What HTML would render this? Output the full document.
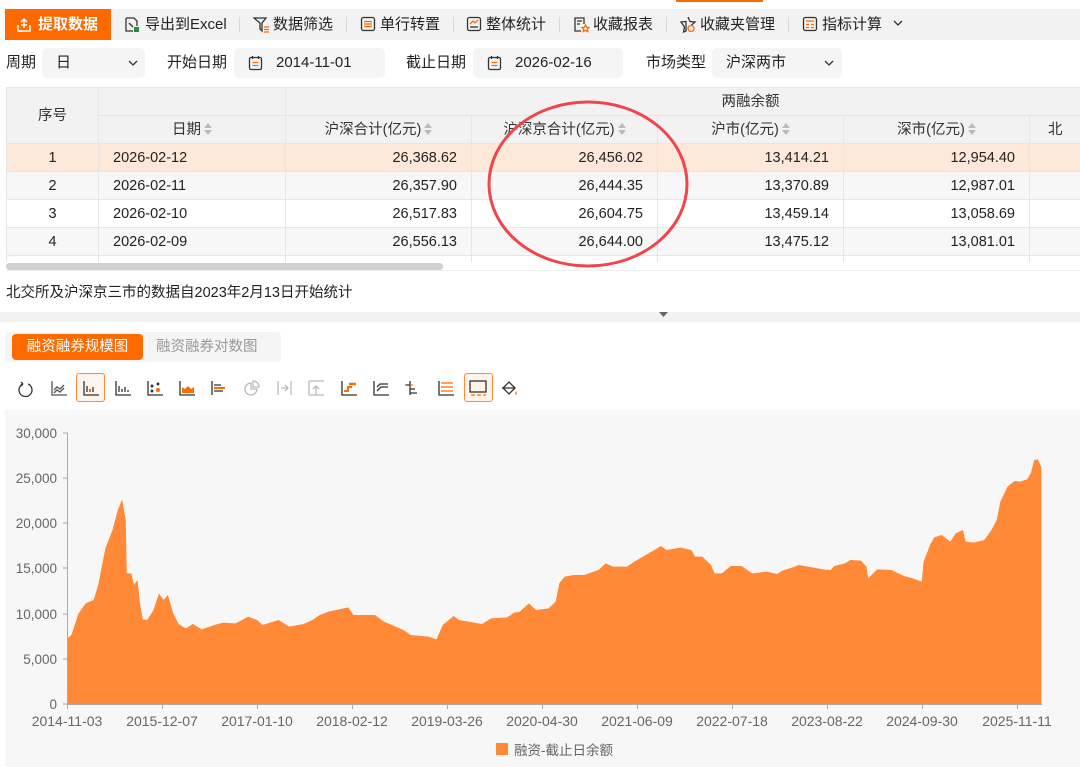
<!DOCTYPE html>
<html><head><meta charset="utf-8"><style>
*{margin:0;padding:0;box-sizing:border-box}
body{width:1080px;height:767px;overflow:hidden;background:#fff;font-family:"Liberation Sans","Noto Sans CJK SC",sans-serif;color:#333;position:relative;font-size:15px}
.a{position:absolute}
.tb{left:5px;top:9px;width:1075px;height:31px;background:#f2f2f2}
.tbi{top:9px;height:31px;line-height:31px;font-size:15px;color:#222}
.sep{top:17px;width:1px;height:15px;background:#d8d8d8}
.box{top:48px;height:30px;background:#f5f5f5;border-radius:5px;line-height:30px;font-size:15px;color:#222}
.lbl{top:48px;line-height:30px;font-size:15px;color:#222}
.cell{position:absolute;height:28px;line-height:28px;font-size:14.5px;color:#222;border-right:1px solid #e6e6e6;border-bottom:1px solid #e6e6e6}
.r{text-align:right;padding-right:14px}
.c{text-align:center}
.l{padding-left:14px}
.h{background:#f2f2f2;color:#333}
.sort{display:inline-block;width:8px;height:12px;vertical-align:-1px;margin-left:3px}
</style></head><body>
<div class="a" style="left:676px;top:0;width:87px;height:2px;background:#ff6a00"></div>
<div class="a tb"></div>
<div class="a" style="left:5px;top:9px;width:106px;height:31px;background:#ff6a00;color:#fff;line-height:31px;font-size:15px;font-weight:bold">
<svg class="a" style="left:11px;top:8px" width="16" height="16" viewBox="0 0 16 16" fill="none" stroke="#fff" stroke-width="1.4"><path d="M2 8v6h12V8M5 8h6M8 11V2M5 5l3-3 3 3"/></svg>
<span class="a" style="left:33px">提取数据</span></div>
<svg class="a" style="left:124px;top:16px" width="16" height="17" viewBox="0 0 16 17" fill="none" stroke="#333" stroke-width="1.3"><path d="M2 2h8l3 3v5M2 2v13h7"/><path d="M5 7l4 4" /><rect x="10" y="11" width="5" height="5" fill="#2a8a3a" stroke="none"/></svg>
<span class="a tbi" style="left:145px">导出到Excel</span>
<div class="a sep" style="left:239px"></div>
<svg class="a" style="left:253px;top:16px" width="17" height="17" viewBox="0 0 17 17" fill="none" stroke="#333" stroke-width="1.3"><path d="M1 2h12L9 7v8l-2-2V7z"/><path d="M11 11h5M11 13.5h5M11 16h5" stroke="#ff6a00"/></svg>
<span class="a tbi" style="left:273px">数据筛选</span>
<div class="a sep" style="left:346px"></div>
<svg class="a" style="left:360px;top:16px" width="16" height="16" viewBox="0 0 16 16" fill="none" stroke="#333" stroke-width="1.3"><rect x="1.5" y="1.5" width="13" height="13" rx="2"/><path d="M4 5.5h8M4 8h8M4 10.5h8" stroke="#ff6a00"/></svg>
<span class="a tbi" style="left:380px">单行转置</span>
<div class="a sep" style="left:453px"></div>
<svg class="a" style="left:466px;top:16px" width="16" height="16" viewBox="0 0 16 16" fill="none" stroke="#333" stroke-width="1.3"><rect x="1.5" y="1.5" width="13" height="13" rx="2"/><path d="M4 8l3-3 2 2 3-3" stroke="#ff6a00"/><path d="M4 11h8"/></svg>
<span class="a tbi" style="left:486px">整体统计</span>
<div class="a sep" style="left:559px"></div>
<svg class="a" style="left:573px;top:16px" width="17" height="17" viewBox="0 0 17 17" fill="none" stroke="#333" stroke-width="1.3"><path d="M8 15H2V2h9v6M4 5h5M4 8h3"/><path d="M12.5 9l1.2 2.3 2.3.3-1.7 1.6.5 2.4-2.3-1.2-2.3 1.2.5-2.4-1.7-1.6 2.3-.3z" stroke="#ff6a00"/></svg>
<span class="a tbi" style="left:593px">收藏报表</span>
<div class="a sep" style="left:666px"></div>
<svg class="a" style="left:680px;top:16px" width="17" height="17" viewBox="0 0 17 17" fill="none" stroke="#333" stroke-width="1.3"><path d="M8 1l2 4.5 5 .5-3.7 3.3M6 15l-2.5 1 1-5L1 6l5-.5z"/><circle cx="11" cy="12.5" r="3" stroke="#ff6a00"/></svg>
<span class="a tbi" style="left:700px">收藏夹管理</span>
<div class="a sep" style="left:788px"></div>
<svg class="a" style="left:802px;top:16px" width="16" height="16" viewBox="0 0 16 16" fill="none" stroke="#333" stroke-width="1.3"><rect x="1.5" y="1.5" width="13" height="13" rx="2"/><path d="M4 5h8M4 8.5h3M9 8.5h3M4 11.5h3M9 11.5h3" stroke="#ff6a00"/></svg>
<span class="a tbi" style="left:822px">指标计算</span>
<svg class="a" style="left:893px;top:20px" width="10" height="7" viewBox="0 0 10 7" fill="none" stroke="#333" stroke-width="1.3"><path d="M1 1l4 4 4-4"/></svg>

<span class="a lbl" style="left:6px">周期</span>
<div class="a box" style="left:42px;width:103px;padding-left:14px">日<svg class="a" style="left:86px;top:12px" width="10" height="7" viewBox="0 0 10 7" fill="none" stroke="#333" stroke-width="1.3"><path d="M1 1l4 4 4-4"/></svg></div>
<span class="a lbl" style="left:167px">开始日期</span>
<div class="a box" style="left:234px;width:151px;padding-left:42px"><svg class="a" style="left:14px;top:7px" width="15" height="16" viewBox="0 0 15 16" fill="none" stroke="#333" stroke-width="1.3"><rect x="1.5" y="2.5" width="12" height="12" rx="1.5"/><path d="M4.5 1v3M10.5 1v3"/><path d="M4.5 7.5h6M4.5 10.5h6" stroke="#ff6a00"/></svg>2014-11-01</div>
<span class="a lbl" style="left:406px">截止日期</span>
<div class="a box" style="left:473px;width:150px;padding-left:42px"><svg class="a" style="left:14px;top:7px" width="15" height="16" viewBox="0 0 15 16" fill="none" stroke="#333" stroke-width="1.3"><rect x="1.5" y="2.5" width="12" height="12" rx="1.5"/><path d="M4.5 1v3M10.5 1v3"/><path d="M4.5 7.5h6M4.5 10.5h6" stroke="#ff6a00"/></svg>2026-02-16</div>
<span class="a lbl" style="left:646px">市场类型</span>
<div class="a box" style="left:712px;width:130px;padding-left:14px">沪深两市<svg class="a" style="left:112px;top:12px" width="10" height="7" viewBox="0 0 10 7" fill="none" stroke="#333" stroke-width="1.3"><path d="M1 1l4 4 4-4"/></svg></div>

<div class="a" style="left:6px;top:87px;width:1074px;height:176px;border-top:1px solid #e6e6e6;border-left:1px solid #e6e6e6;overflow:hidden">
<div class="cell h c" style="left:0;top:0;width:92px;height:56px;line-height:56px">序号</div>
<div class="cell h" style="left:92px;top:0;width:187px"></div>
<div class="cell h c" style="left:279px;top:0;width:930px">两融余额</div>
<div class="cell h c" style="left:92px;top:28px;width:187px">日期<svg class="sort" viewBox="0 0 8 12"><path d="M4 0l4 5H0zM4 12l4-5H0z" fill="#bbb"/></svg></div>
<div class="cell h c" style="left:279px;top:28px;width:186px">沪深合计(亿元)<svg class="sort" viewBox="0 0 8 12"><path d="M4 0l4 5H0zM4 12l4-5H0z" fill="#bbb"/></svg></div>
<div class="cell h c" style="left:465px;top:28px;width:186px">沪深京合计(亿元)<svg class="sort" viewBox="0 0 8 12"><path d="M4 0l4 5H0zM4 12l4-5H0z" fill="#bbb"/></svg></div>
<div class="cell h c" style="left:651px;top:28px;width:186px">沪市(亿元)<svg class="sort" viewBox="0 0 8 12"><path d="M4 0l4 5H0zM4 12l4-5H0z" fill="#bbb"/></svg></div>
<div class="cell h c" style="left:837px;top:28px;width:186px">深市(亿元)<svg class="sort" viewBox="0 0 8 12"><path d="M4 0l4 5H0zM4 12l4-5H0z" fill="#bbb"/></svg></div>
<div class="cell h" style="left:1023px;top:28px;width:60px;padding-left:18px">北</div>

<div class="a" style="left:0;top:56px;width:1080px;height:28px;background:#fde8d9"></div>
<div class="a" style="left:0;top:84px;width:1080px;height:28px;background:#f7f7f7"></div>
<div class="a" style="left:0;top:140px;width:1080px;height:28px;background:#f7f7f7"></div>

<div class="cell c" style="left:0;top:56px;width:92px">1</div><div class="cell l" style="left:92px;top:56px;width:187px">2026-02-12</div><div class="cell r" style="left:279px;top:56px;width:186px">26,368.62</div><div class="cell r" style="left:465px;top:56px;width:186px">26,456.02</div><div class="cell r" style="left:651px;top:56px;width:186px">13,414.21</div><div class="cell r" style="left:837px;top:56px;width:186px">12,954.40</div><div class="cell" style="left:1023px;top:56px;width:60px"></div>
<div class="cell c" style="left:0;top:84px;width:92px">2</div><div class="cell l" style="left:92px;top:84px;width:187px">2026-02-11</div><div class="cell r" style="left:279px;top:84px;width:186px">26,357.90</div><div class="cell r" style="left:465px;top:84px;width:186px">26,444.35</div><div class="cell r" style="left:651px;top:84px;width:186px">13,370.89</div><div class="cell r" style="left:837px;top:84px;width:186px">12,987.01</div><div class="cell" style="left:1023px;top:84px;width:60px"></div>
<div class="cell c" style="left:0;top:112px;width:92px">3</div><div class="cell l" style="left:92px;top:112px;width:187px">2026-02-10</div><div class="cell r" style="left:279px;top:112px;width:186px">26,517.83</div><div class="cell r" style="left:465px;top:112px;width:186px">26,604.75</div><div class="cell r" style="left:651px;top:112px;width:186px">13,459.14</div><div class="cell r" style="left:837px;top:112px;width:186px">13,058.69</div><div class="cell" style="left:1023px;top:112px;width:60px"></div>
<div class="cell c" style="left:0;top:140px;width:92px">4</div><div class="cell l" style="left:92px;top:140px;width:187px">2026-02-09</div><div class="cell r" style="left:279px;top:140px;width:186px">26,556.13</div><div class="cell r" style="left:465px;top:140px;width:186px">26,644.00</div><div class="cell r" style="left:651px;top:140px;width:186px">13,475.12</div><div class="cell r" style="left:837px;top:140px;width:186px">13,081.01</div><div class="cell" style="left:1023px;top:140px;width:60px"></div>
<div class="cell" style="left:0;top:168px;width:92px"></div><div class="cell" style="left:92px;top:168px;width:187px"></div><div class="cell" style="left:279px;top:168px;width:186px"></div><div class="cell" style="left:465px;top:168px;width:186px"></div><div class="cell" style="left:651px;top:168px;width:186px"></div><div class="cell" style="left:837px;top:168px;width:186px"></div>
</div>
<div class="a" style="left:6px;top:262px;width:1074px;height:9px;background:#fff;border-bottom:1px solid #eee"></div>
<div class="a" style="left:6px;top:263px;width:437px;height:7px;background:#d0d0d0;border-radius:4px"></div>
<svg class="a" style="left:487px;top:100px" width="202" height="170"><ellipse cx="101" cy="84" rx="99" ry="82" fill="none" stroke="#f0454d" stroke-width="3"/></svg>

<span class="a" style="left:6px;top:283px;font-size:14.5px;color:#222;line-height:20px">北交所及沪深京三市的数据自2023年2月13日开始统计</span>
<div class="a" style="left:0;top:312px;width:1080px;height:10px;background:#f2f2f2"></div>
<svg class="a" style="left:659px;top:312px" width="9" height="6"><path d="M0 0h9L4.5 5z" fill="#666"/></svg>

<div class="a" style="left:5px;top:332px;width:276px;height:30px;background:#f5f5f5;border-radius:4px"></div>
<div class="a" style="left:12px;top:334px;width:131px;height:26px;background:#ff6a00;border-radius:4px;color:#fff;font-size:14.5px;line-height:26px;text-align:center">融资融券规模图</div>
<span class="a" style="left:156px;top:334px;font-size:14.5px;line-height:26px;color:#999">融资融券对数图</span>

<div class="a" style="left:76px;top:373px;width:29px;height:29px;border:1.5px solid #ff8a3a;border-radius:3px;background:#fff4ec"></div>
<div class="a" style="left:464px;top:373px;width:29px;height:29px;border:1.5px solid #ff8a3a;border-radius:3px;background:#fff4ec"></div>
<svg class="a" style="left:0;top:374px" width="540" height="28" fill="none" stroke-width="1.3">
<path d="M23 9a6.5 6.5 0 1 0 5 0M23 9l-2-2M23 9l-2 2" stroke="#333" transform="translate(0,1)"/>
<g stroke="#555"><path d="M52 7v14h15"/><path d="M54 16l3-3 3 2 4-4" /><path d="M54 19l3-3 3 2 4-4"/></g>
<g stroke="#333"><path d="M84 7v14h15"/><path d="M87 18v-6M90 18v-3M93 18v-5"/><path d="M90 18v-3" stroke="#ff6a00" stroke-width="2"/></g>
<g stroke="#333"><path d="M116 7v14h15"/><path d="M119 18v-6M122 18v-3M125 18v-5M128 18v-2"/></g>
<g stroke="#333"><path d="M148 7v14h15"/><circle cx="152" cy="12" r=".8" fill="#333"/><circle cx="158" cy="10" r=".8" fill="#333"/><circle cx="152" cy="17" r=".8" fill="#333"/></g><circle cx="158" cy="16" r="2" fill="#ff6a00"/>
<g stroke="#333"><path d="M180 7v14h15"/></g><path d="M182 19v-6l3 2 3-3 3 3 3-2v6z" fill="#ff6a00"/>
<g stroke="#333"><path d="M212 7v14"/><path d="M214 11h7M214 17h9"/></g><path d="M214 14h11" stroke="#ff6a00" stroke-width="2"/>
<g stroke="#bbb"><path d="M251 9a6 6 0 1 0 6 6h-6z"/><path d="M253 7a6 6 0 0 1 6 6h-6z"/></g>
<g stroke="#bbb"><path d="M278 7v14M291 7v14M281 14h6M285 11l3 3-3 3"/></g>
<g stroke="#bbb"><path d="M309 7h15M309 7v14h15M316 21v-9M313 15l3-3 3 3"/></g>
<g stroke="#333"><path d="M342 7v14h15"/></g><path d="M344 17h4v-4h4" stroke="#ff6a00" stroke-width="2"/><path d="M349 10h7" stroke="#ff6a00" stroke-width="2.5"/>
<g stroke="#333"><path d="M374 7v14h15M377 17l4-4h7M377 13l3-3h8"/></g>
<g stroke="#333"><path d="M410 7v14M406 11h4M410 15h5M410 19h7"/></g><path d="M406 11h-1M410 11h3" stroke="#ff6a00"/>
<g stroke="#333"><path d="M439 7v14h15"/><path d="M441 9h12M441 13h12M441 17h12" stroke="#ff6a00"/></g>
<g stroke="#333"><rect x="470" y="7" width="16" height="11"/><path d="M471 21h4M477 21h4M483 21h3" stroke="#ff6a00"/></g>
<g stroke="#333"><path d="M503 14l6-6 6 6-6 6zM502 14h13"/></g><path d="M516 17q-1.5 2.5 0 4q1.5-1.5 0-4" fill="#ff6a00"/>
</svg>

<div class="a" style="left:5px;top:410px;width:1075px;height:357px;background:#f7f7f7"></div>
<svg class="a" style="left:0;top:0" width="1080" height="767">
<g fill="#ff8936" stroke="none">
<g transform="translate(0,420) scale(0.35714,0.33333)"><path d="M188,853 188,655 200,645 220,580 240,550 262,540 275,495 295,385 315,330 330,270 342,238 352,300 355,460 368,460 375,495 385,480 392,550 400,598 412,600 430,570 445,520 458,540 470,525 485,580 500,612 520,625 540,612 565,628 600,615 625,608 660,610 695,590 720,600 735,615 780,600 810,620 850,612 875,600 895,585 920,575 975,562 990,585 1050,585 1075,605 1130,630 1150,645 1200,650 1222,658 1240,615 1270,588 1285,600 1350,612 1375,595 1420,592 1440,578 1458,575 1458,853Z"/></g>
<g transform="translate(520,420) scale(0.35714,0.33333)"><path d="M-1,853 -1,575 25,550 45,570 80,565 100,545 110,490 125,470 150,465 180,465 220,450 240,430 260,440 300,440 320,425 360,400 395,378 410,390 450,383 480,390 490,410 510,410 535,435 545,460 565,460 590,438 620,438 650,460 690,455 720,462 735,452 770,440 780,435 850,448 870,450 880,438 910,430 925,420 955,422 970,440 975,475 1000,448 1040,450 1075,468 1100,475 1125,485 1130,425 1150,370 1160,352 1180,345 1205,365 1220,340 1240,330 1248,365 1270,368 1300,360 1320,330 1335,300 1345,245 1365,200 1385,183 1400,185 1420,178 1430,160 1440,120 1450,118 1460,143 1460,853Z"/></g>
</g>
<g stroke="#aaa" stroke-width="1">
<path d="M67.5 433v271M63 433h4.5M63 478h4.5M63 523h4.5M63 568h4.5M63 614h4.5M63 659h4.5M63 704h4.5"/>
<path d="M67 704.5h975M67.5 704v5M162.5 704v5M257.5 704v5M352.5 704v5M447.5 704v5M542.5 704v5M637.5 704v5M732.5 704v5M827.5 704v5M922.5 704v5M1017.5 704v5"/>
</g>
<g font-family="Liberation Sans, sans-serif" font-size="13.5" fill="#666" text-anchor="end">
<text x="57" y="438">30,000</text><text x="57" y="483">25,000</text><text x="57" y="528">20,000</text><text x="57" y="573">15,000</text><text x="57" y="619">10,000</text><text x="57" y="664">5,000</text><text x="57" y="709">0</text>
</g>
<g font-family="Liberation Sans, sans-serif" font-size="14" fill="#666" text-anchor="middle">
<text x="67" y="726">2014-11-03</text><text x="162" y="726">2015-12-07</text><text x="257" y="726">2017-01-10</text><text x="352" y="726">2018-02-12</text><text x="447" y="726">2019-03-26</text><text x="542" y="726">2020-04-30</text><text x="637" y="726">2021-06-09</text><text x="732" y="726">2022-07-18</text><text x="827" y="726">2023-08-22</text><text x="922" y="726">2024-09-30</text><text x="1017" y="726">2025-11-11</text>
</g>
<rect x="496" y="743" width="12" height="12" fill="#ff8936"/>
<text x="514" y="755" font-family="Liberation Sans, Noto Sans CJK SC, sans-serif" font-size="13.5" fill="#666">融资-截止日余额</text>
</svg>
</body></html>
